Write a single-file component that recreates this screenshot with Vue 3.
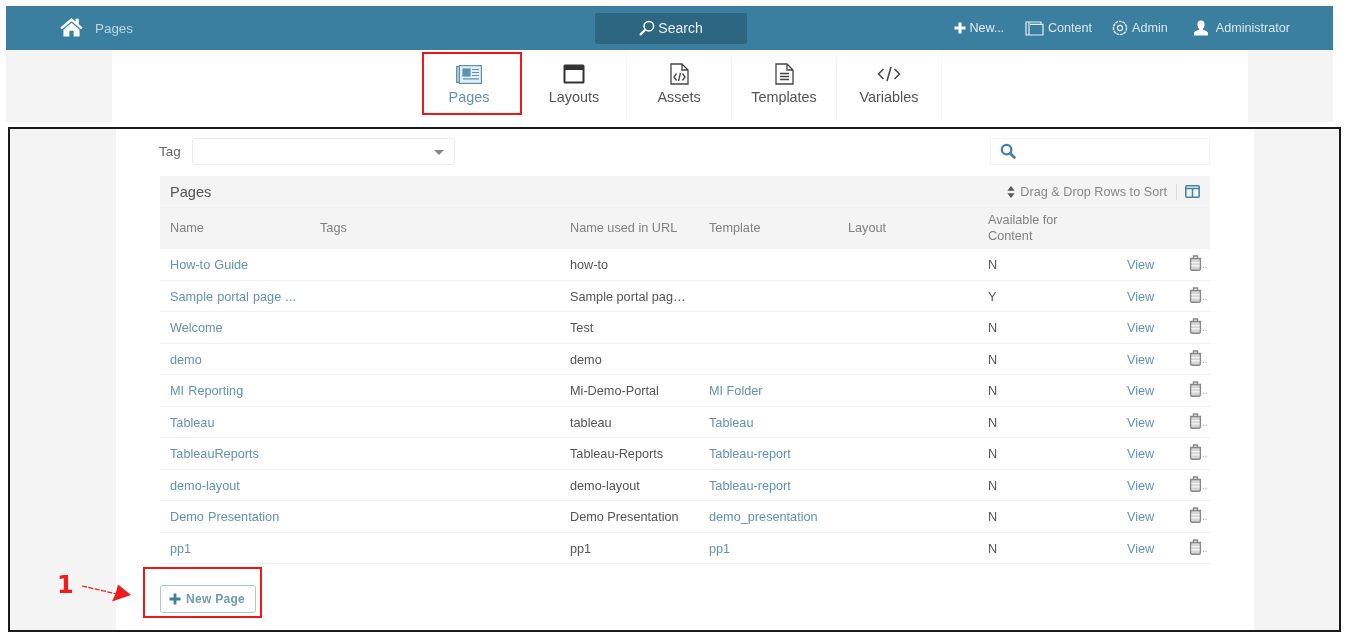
<script setup>
const tabs = [
  { id: 'pages', label: 'Pages' },
  { id: 'layouts', label: 'Layouts' },
  { id: 'assets', label: 'Assets' },
  { id: 'templates', label: 'Templates' },
  { id: 'variables', label: 'Variables' },
]
const rows = [
  ['How-to Guide', 'how-to', '', 'N'],
  ['Sample portal page ...', 'Sample portal pag…', '', 'Y'],
  ['Welcome', 'Test', '', 'N'],
  ['demo', 'demo', '', 'N'],
  ['MI Reporting', 'Mi-Demo-Portal', 'MI Folder', 'N'],
  ['Tableau', 'tableau', 'Tableau', 'N'],
  ['TableauReports', 'Tableau-Reports', 'Tableau-report', 'N'],
  ['demo-layout', 'demo-layout', 'Tableau-report', 'N'],
  ['Demo Presentation', 'Demo Presentation', 'demo_presentation', 'N'],
  ['pp1', 'pp1', 'pp1', 'N'],
]
</script>

<template>
  <div class="page">
    <header class="topbar">
      <div class="brand">
        <svg class="home" viewBox="0 0 24 20" width="23" height="20">
          <path d="M12 0.5 L0.3 10.4 L2 12.4 L12 4 L22 12.4 L23.7 10.4 L19.6 7 V1.4 H16.2 V4.2 Z" fill="#fff" />
          <path d="M12 5.6 L3.6 12.6 V20 H9.8 V14 H14.2 V20 H20.4 V12.6 Z" fill="#fff" />
        </svg>
        <span class="brand-label">Pages</span>
      </div>
      <div class="search">
        <svg viewBox="0 0 16 16" width="16" height="16" fill="none" stroke="#fff">
          <circle cx="9.8" cy="6.2" r="4.8" stroke-width="1.5" />
          <path d="M6.3 9.7 L1.6 14.4" stroke-width="2.2" stroke-linecap="round" />
        </svg>
        <span>Search</span>
      </div>
      <nav class="actions">
        <span class="action new">
          <svg viewBox="0 0 12 12" width="12" height="12"><path d="M4.5 0.5h3v4h4v3h-4v4h-3v-4h-4v-3h4z" fill="#fff" /></svg>
          New...
        </span>
        <span class="action content">
          <svg viewBox="0 0 19 15" width="19" height="15" fill="none" stroke="#e6eef3" stroke-width="1.2">
            <path d="M4 1 H1 V14 H18 V3.4 H5 M4 1 H16 V3.4 M4 1 V14" />
          </svg>
          Content
        </span>
        <span class="action admin">
          <svg viewBox="0 0 16 16" width="16" height="16" fill="none" stroke="#e6eef3">
            <circle cx="8" cy="8" r="6.6" stroke-width="1.4" stroke-dasharray="3 0.7" />
            <circle cx="8" cy="8" r="2.6" stroke-width="1.1" />
          </svg>
          Admin
        </span>
        <span class="action user">
          <svg viewBox="0 0 16 16" width="16" height="16">
            <path d="M8 0.5c2.3 0 3.6 1.6 3.6 3.9 0 1.8-.8 3.4-1.8 4.2v1.2c1.8.7 5.2 1.4 5.2 3.4V15.5H1v-2.3c0-2 3.4-2.7 5.2-3.4V8.6C5.2 7.8 4.4 6.2 4.4 4.4 4.4 2.1 5.7 0.5 8 0.5z" fill="#fff" />
          </svg>
          Administrator
        </span>
      </nav>
    </header>

    <div class="subnav-band">
      <div class="subnav">
        <div class="tabs">
          <div v-for="t in tabs" :key="t.id" class="tab" :class="{ active: t.id === 'pages' }">
            <div class="tab-icon">
              <svg v-if="t.id === 'pages'" viewBox="0 0 26 19" width="26" height="19" fill="none" stroke="#5b93b0" stroke-width="1.2">
                <rect x="0.6" y="1.6" width="24.8" height="15.8" fill="#b9d2e0" />
                <rect x="3.4" y="0.6" width="22" height="17.8" fill="#e4eef4" />
                <rect x="7" y="4" width="7" height="7" fill="#5b93b0" />
                <path d="M16 4.5h7M16 7.5h7M16 10.5h7M7 13.8h16" />
              </svg>
              <svg v-else-if="t.id === 'layouts'" viewBox="0 0 22 20" width="22" height="20">
                <rect x="0.5" y="0.5" width="21" height="19" rx="1.5" fill="#333" />
                <rect x="2.5" y="6" width="17" height="11.5" fill="#fff" />
              </svg>
              <svg v-else-if="t.id === 'assets'" viewBox="0 0 19 22" width="19" height="22" fill="none" stroke="#444" stroke-width="1.3">
                <path d="M1 1 H12 L18 7 V21 H1 Z M12 1 V7 H18" />
                <path d="M6.5 10.5 L4 14 L6.5 17.5 M12.5 10.5 L15 14 L12.5 17.5 M10.4 10 L8.6 18" />
              </svg>
              <svg v-else-if="t.id === 'templates'" viewBox="0 0 19 22" width="19" height="22" fill="none" stroke="#444" stroke-width="1.3">
                <path d="M1 1 H12 L18 7 V21 H1 Z M12 1 V7 H18" />
                <path d="M5 10.5h9M5 13.5h9M5 16.5h9" stroke-width="1.4" />
              </svg>
              <svg v-else viewBox="0 0 24 16" width="24" height="16" fill="none" stroke="#444" stroke-width="1.5">
                <path d="M6.5 3 L1.5 8 L6.5 13 M17.5 3 L22.5 8 L17.5 13 M14 1 L10 15" />
              </svg>
            </div>
            <span class="tab-label">{{ t.label }}</span>
          </div>
        </div>
      </div>
    </div>

    <div class="gap"></div>

    <section class="frame">
      <div class="sheet">
        <div class="filters">
          <label class="tag-label">Tag</label>
          <div class="select"><i class="caret"></i></div>
          <div class="spacer"></div>
          <div class="find">
            <svg viewBox="0 0 16 16" width="16" height="16" fill="none" stroke="#3f83a6">
              <circle cx="6.6" cy="6.6" r="4.8" stroke-width="2.2" />
              <path d="M10.2 10.2 L14.4 14.4" stroke-width="2.8" stroke-linecap="round" />
            </svg>
          </div>
        </div>

        <div class="panel">
          <div class="panel-head">
            <span class="panel-title">Pages</span>
            <div class="panel-tools">
              <svg viewBox="0 0 8 12" width="8" height="12"><path d="M4 0 L7.6 4.8 H0.4 Z M4 12 L0.4 7.2 H7.6 Z" fill="#555" /></svg>
              <span>Drag &amp; Drop Rows to Sort</span>
              <i class="tool-sep"></i>
              <svg viewBox="0 0 15 13" width="15" height="13" fill="none" stroke="#3f83a6" stroke-width="1.5">
                <rect x="0.8" y="0.8" width="13.4" height="11.4" rx="1" />
                <path d="M0.8 3.4h13.4M7.5 3.4v8.8" />
              </svg>
            </div>
          </div>
          <div class="row head">
            <div class="c name">Name</div>
            <div class="c tags">Tags</div>
            <div class="c url">Name used in URL</div>
            <div class="c tpl">Template</div>
            <div class="c lay">Layout</div>
            <div class="c avail">Available for<br />Content</div>
            <div class="c view"></div>
            <div class="c del"></div>
          </div>
          <div v-for="r in rows" :key="r[0]" class="row body">
            <div class="c name link">{{ r[0] }}</div>
            <div class="c tags"></div>
            <div class="c url">{{ r[1] }}</div>
            <div class="c tpl link">{{ r[2] }}</div>
            <div class="c lay"></div>
            <div class="c avail">{{ r[3] }}</div>
            <div class="c view link">View</div>
            <div class="c del">
              <svg viewBox="0 0 13 16" width="13" height="16" fill="#d6d6d6" stroke="#888" stroke-width="1.4">
                <path d="M0.8 3.4h11.4M4.5 3.2V1h4v2.2" fill="none" />
                <rect x="1.6" y="3.6" width="9.8" height="11.6" rx="1.4" />
                <path d="M2.4 7.6h8.2M2.4 10.8h8.2" stroke="#f2f2f2" />
              </svg>
              <span class="del-dot">..</span>
            </div>
          </div>
        </div>

        <div class="footer">
          <button class="new-page" type="button">
            <svg viewBox="0 0 12 12" width="12" height="12"><path d="M4.6 0.5h2.8v4.1h4.1v2.8H7.4v4.1H4.6V7.4H0.5V4.6h4.1z" fill="#3f7f9f" /></svg>
            New Page
          </button>
        </div>
      </div>
    </section>

    <div class="mark mark-pages"></div>
    <div class="mark mark-new"></div>
    <span class="callout">1</span>
    <svg class="arrow" viewBox="0 0 52 22" width="52" height="22">
      <path d="M1 2 L36 10" stroke="#f01c1c" stroke-width="1.2" stroke-dasharray="5 1.5" fill="none" />
      <path d="M37 0.5 L50 11 L31 17.5 L34.5 10 Z" fill="#f01c1c" />
    </svg>
  </div>
</template>

<style>
html, body { margin: 0; background: #fff; }
</style>

<style scoped>
.page {
  position: relative;
  width: 1347px;
  height: 640px;
  overflow: hidden;
  box-sizing: border-box;
  padding-top: 6px;
  font-family: "Liberation Sans", Arial, sans-serif;
  font-size: 12.7px;
  color: #555;
  background: #fff;
  filter: blur(0.6px);
}
.topbar {
  margin: 0 14px 0 6px;
  height: 44px;
  background: #3a7fa0;
  display: flex;
  align-items: center;
  box-sizing: border-box;
  padding-left: 54px;
  padding-right: 43px;
}
.brand { display: flex; align-items: center; gap: 12px; flex: 0 0 535px; }
.home { margin-top: -3px; }
.brand-label { color: #bdd5e2; font-size: 13.4px; }
.search {
  flex: 0 0 152px;
  height: 31px;
  background: #2c6680;
  border-radius: 2px;
  color: #e8f1f5;
  font-size: 14px;
  display: flex;
  align-items: center;
  justify-content: center;
  gap: 3px;
}
.actions {
  margin-left: auto;
  display: flex;
  align-items: center;
  color: #d8e6ee;
  font-size: 12.6px;
}
.action { display: flex; align-items: center; gap: 4px; }
.new { color: #e3edf2; margin-right: 21px; letter-spacing: -0.1px; }
.content { margin-right: 20px; }
.admin { margin-right: 25px; }
.user svg { margin-right: 3px; }
.subnav-band {
  margin: 0 14px 0 6px;
  height: 72px;
  background: #f4f4f4;
  display: flex;
  padding-left: 106px;
}
.subnav {
  width: 1136px;
  background: #fff;
}
.tabs {
  display: flex;
  margin-left: 305px;
  height: 70px;
}
.tab {
  width: 105px;
  box-sizing: border-box;
  border-right: 1px solid #f6f6f6;
  display: flex;
  flex-direction: column;
  align-items: center;
  padding-top: 12px;
  gap: 3px;
  font-size: 14.4px;
  line-height: 16px;
  color: #555;
}
.tab-icon {
  height: 24px;
  display: flex;
  align-items: center;
  justify-content: center;
}
.tab.active { color: #5f94b3; }
.gap { height: 5px; }
.frame {
  margin: 0 6px 0 8px;
  height: 505px;
  border: 2px solid #1a1a1a;
  box-sizing: border-box;
  background: #f4f4f4;
  display: flex;
}
.sheet {
  margin-left: 106px;
  width: 1138px;
  background: #fff;
  padding: 7px 44px 0 44px;
  box-sizing: border-box;
}
.filters {
  display: flex;
  align-items: center;
  height: 30px;
  margin-bottom: 10px;
}
.tag-label { font-size: 13.4px; color: #666; width: 32px; margin-left: -1px; margin-right: 1px; }
.select {
  width: 263px;
  height: 27px;
  border: 1px solid #ececec;
  border-radius: 3px;
  position: relative;
  box-sizing: border-box;
}
.caret {
  position: absolute;
  right: 10px;
  top: 11px;
  border: 5px solid transparent;
  border-top-color: #888;
  border-bottom-width: 0;
}
.spacer { flex: 1; }
.find {
  width: 220px;
  height: 27px;
  border: 1px solid #f3f3f3;
  box-sizing: border-box;
  display: flex;
  align-items: center;
  padding-left: 9px;
}
.panel { width: 1050px; }
.panel-head {
  height: 31px;
  background: #f4f4f4;
  display: flex;
  align-items: center;
  justify-content: space-between;
  padding: 0 10px 0 10px;
}
.panel-title { font-size: 14.6px; color: #555; }
.panel-tools {
  display: flex;
  align-items: center;
  gap: 5px;
  color: #888;
  font-size: 12.7px;
}
.tool-sep { width: 1px; height: 16px; background: #ddd; margin: 0 3px 0 4px; }
.row {
  display: grid;
  grid-template-columns: 150px 250px 139px 139px 140px 139px 61px 32px;
  align-items: center;
}
.row.head {
  height: 42px;
  background: #f4f4f4;
  color: #808080;
  line-height: 16px;
  border-top: 1px solid #efefef;
  box-sizing: border-box;
  padding-bottom: 2px;
}
.row.body {
  height: 31.5px;
  border-bottom: 1px solid #f0f0f0;
  box-sizing: border-box;
  color: #555;
  padding-top: 2px;
  white-space: nowrap;
}
.c { padding-left: 10px; min-width: 0; }
.link { color: #6394b3; }
.name.link { word-spacing: 0.6px; }
.del { padding-left: 11px; display: flex; align-items: center; overflow: hidden; margin-top: -4px; }
.del-dot { color: #aaa; font-size: 10px; align-self: flex-end; margin-bottom: 1px; }
.footer { padding-top: 21px; }
.new-page {
  display: flex;
  align-items: center;
  gap: 5px;
  width: 96px;
  height: 28px;
  margin: 0;
  padding: 0 0 0 8px;
  box-sizing: border-box;
  background: #fff;
  border: 1px solid #a9c8d8;
  border-radius: 3px;
  color: #6f9cb8;
  font-family: inherit;
  font-weight: 700;
  font-size: 12px;
  letter-spacing: 0.3px;
}
.mark { position: absolute; border: 2px solid #f21616; box-sizing: border-box; }
.mark-pages { left: 422px; top: 52px; width: 100px; height: 63px; }
.mark-new { left: 143px; top: 567px; width: 119px; height: 51px; }
.callout {
  position: absolute;
  left: 57px;
  top: 570px;
  color: #f01c1c;
  font-family: "DejaVu Sans", sans-serif;
  font-size: 24px;
  font-weight: 700;
  line-height: 30px;
}
.arrow { position: absolute; left: 81px; top: 584px; }
</style>
